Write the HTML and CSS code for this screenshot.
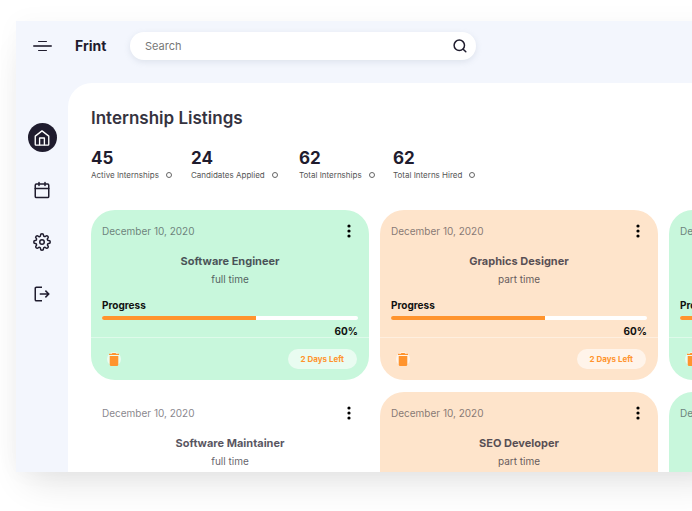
FILE: index.html
```html
<!DOCTYPE html>
<html lang="en">
<head>
<meta charset="utf-8">
<meta name="viewport" content="width=device-width, initial-scale=1">
<title>Frint</title>
<link rel="stylesheet" href="styles.css">
</head>
<body>
<div class="app">
  <header class="topbar">
    <button class="icon-button menu" type="button" aria-label="Menu"><span class="menu-line short"></span><span class="menu-line"></span><span class="menu-line short"></span></button>
    <span class="brand">Frint</span>
    <form class="search">
      <input class="search-input" type="search" placeholder="Search" aria-label="Search">
      <button class="icon-button" type="submit" aria-label="Submit search">
        <svg width="14" height="14" viewBox="0 0 14 14" fill="none" stroke="#1f1c2e" stroke-width="1.5"><circle cx="6.3" cy="6.3" r="5.2"/><path d="M10.2 10.2 12.8 12.8" stroke-linecap="round"/></svg>
      </button>
    </form>
  </header>
  <div class="body">
    <nav class="sidebar" aria-label="Main">
      <a class="nav-link active" href="#" aria-label="Home">
        <svg width="18" height="18" viewBox="0 0 24 24" fill="none" stroke="currentColor" stroke-width="1.8" stroke-linejoin="round"><path d="M3 9.500 12 2.500l9 7V20.500a1 1 0 0 1-1 1H4a1 1 0 0 1-1-1z"/><path d="M8.800 21.500v-9.500h6.400v9.500"/></svg>
      </a>
      <a class="nav-link" href="#" aria-label="Calendar">
        <svg width="18" height="18" viewBox="0 0 24 24" fill="none" stroke="currentColor" stroke-width="2" stroke-linecap="round" stroke-linejoin="round"><rect x="3" y="4" width="18" height="18" rx="1.500"/><path d="M8 2v4M16 2v4M3 10h18"/></svg>
      </a>
      <a class="nav-link" href="#" aria-label="Settings">
        <svg width="18" height="18" viewBox="0 0 24 24" fill="none" stroke="currentColor" stroke-width="2" stroke-linejoin="round"><circle cx="12" cy="12" r="3"/><path d="M19.4 15a1.65 1.65 0 0 0 .33 1.82l.06.06a2 2 0 1 1-2.830 2.830l-.06-.06a1.65 1.65 0 0 0-2.900 1.170V21a2 2 0 1 1-4 0v-.09A1.65 1.65 0 0 0 7.100 19.650l-.06.06a2 2 0 1 1-2.830-2.830l.06-.06A1.65 1.65 0 0 0 3.100 14H3a2 2 0 1 1 0-4h.09a1.65 1.65 0 0 0 1.180-2.820l-.06-.06a2 2 0 1 1 2.830-2.830l.06.06A1.65 1.65 0 0 0 10 3.100V3a2 2 0 1 1 4 0v.09a1.65 1.65 0 0 0 2.820 1.180l.06-.06a2 2 0 1 1 2.830 2.830l-.06.06A1.65 1.65 0 0 0 20.910 10H21a2 2 0 1 1 0 4h-.09a1.65 1.65 0 0 0-1.510 1z"/></svg>
      </a>
      <a class="nav-link" href="#" aria-label="Log out">
        <svg width="18" height="18" viewBox="0 0 24 24" fill="none" stroke="currentColor" stroke-width="2"><path d="M12 3H4.500A1.500 1.500 0 0 0 3 4.500v15A1.500 1.500 0 0 0 4.500 21H12M9 12h12M16.500 7.500 21 12l-4.500 4.500"/></svg>
      </a>
    </nav>
    <main class="panel">
      <h1 class="page-title">Internship Listings</h1>
      <section class="stats" aria-label="Totals">
        <div class="stat"><strong class="stat-value">45</strong><span class="stat-label">Active Internships<i class="ring"></i></span></div>
        <div class="stat"><strong class="stat-value">24</strong><span class="stat-label">Candidates Applied<i class="ring"></i></span></div>
        <div class="stat"><strong class="stat-value">62</strong><span class="stat-label">Total Internships<i class="ring"></i></span></div>
        <div class="stat"><strong class="stat-value">62</strong><span class="stat-label">Total Interns Hired<i class="ring"></i></span></div>
      </section>
      <section class="cards" id="cards" aria-label="Listings"></section>
    </main>
  </div>
</div>
<template id="card-template">
  <article class="card">
    <div class="card-content">
      <div class="card-top">
        <time class="date" datetime="2020-12-10">December 10, 2020</time>
        <button class="icon-button more" type="button" aria-label="More options"><svg width="4" height="14" viewBox="0 0 4 14"><circle cx="2" cy="2" r="1.600"/><circle cx="2" cy="7" r="1.600"/><circle cx="2" cy="12" r="1.600"/></svg></button>
      </div>
      <h2 class="role"></h2>
      <p class="hours"></p>
      <p class="progress-label">Progress</p>
      <div class="track"><div class="fill"></div></div>
      <p class="percent"></p>
    </div>
    <footer class="card-footer">
      <button class="icon-button trash" type="button" aria-label="Delete"><svg width="10" height="13" viewBox="0 0 10 13" fill="#ff942e"><path d="M0 .7h2.800L3.400 0h3.200l.6.700H10V2H0zM.700 2.900h8.600v8.600A1.500 1.500 0 0 1 7.800 13H2.200A1.500 1.500 0 0 1 .700 11.500z"/></svg></button>
      <span class="pill">2 Days Left</span>
    </footer>
  </article>
</template>
<script src="script.js"></script>
</body>
</html>
```
FILE: styles.css
```css
* {
  box-sizing: border-box;
}

body {
  margin: 0;
  height: 100vh;
  padding: 21px 0 39px 16px;
  overflow: hidden;
  background: #fff;
  color: #1f1c2e;
  font: 11px/16px Inter, "Liberation Sans", sans-serif;
}

h1, h2, p {
  margin: 0;
}

.app {
  display: flex;
  flex-direction: column;
  height: 100%;
  margin-right: -40px;
  background: #f3f6fd;
  box-shadow: 0 20px 36px -12px rgba(0, 0, 0, 0.12), 0 0 24px rgba(0, 0, 0, 0.03);
}

.icon-button {
  display: flex;
  align-items: center;
  justify-content: center;
  padding: 0;
  border: 0;
  background: none;
}

.topbar {
  display: flex;
  align-items: center;
  flex-shrink: 0;
  padding: 11px 16px 23px 17px;
}

.menu {
  flex-direction: column;
  gap: 3px;
  width: 19px;
}

.menu-line {
  width: 100%;
  height: 2px;
  border-radius: 1px;
  background: #4a4857;
}

.menu-line.short {
  width: 9px;
  height: 1px;
  background: #1f1c2e;
}

.brand {
  width: 55px;
  margin-left: 23px;
  font-size: 14px;
  font-weight: 700;
}

.search {
  display: flex;
  align-items: center;
  flex: 0 1 346px;
  height: 28px;
  padding: 0 9px 0 15px;
  border-radius: 14px;
  background: #fff;
  box-shadow: 0 2px 6px rgba(136, 148, 171, 0.2);
}

.search-input {
  flex: 1;
  min-width: 0;
  padding: 0;
  border: 0;
  outline: 0;
  background: none;
  color: inherit;
  font: inherit;
}

.search-input::placeholder {
  color: #777;
}

.body {
  display: flex;
  flex: 1;
  min-height: 0;
}

.sidebar {
  display: flex;
  flex-direction: column;
  align-items: center;
  gap: 23px;
  flex-shrink: 0;
  width: 52px;
  padding-top: 40px;
}

.nav-link {
  display: flex;
  align-items: center;
  justify-content: center;
  width: 29px;
  height: 29px;
  border-radius: 50%;
  color: #1f1c2e;
}

.nav-link.active {
  background: #1f1c2e;
  color: #fff;
}

.panel {
  flex: 1;
  min-width: 0;
  padding: 24px 0 0 23px;
  overflow: hidden;
  border-radius: 24px 0 0 0;
  background: #fff;
}

.page-title {
  color: #35333f;
  font-size: 17px;
  line-height: 22px;
  font-weight: 600;
}

.stats {
  display: grid;
  grid-template-columns: 100px 108px 94px auto;
  padding: 19px 0 28px;
}

.stat-value {
  display: block;
  font-size: 17px;
  line-height: 20px;
  font-weight: 700;
}

.stat-label {
  display: flex;
  align-items: center;
  gap: 7px;
  color: #555;
  font-size: 8px;
  line-height: 14px;
  white-space: nowrap;
}

.ring {
  width: 6px;
  height: 6px;
  border: 1px solid #666;
  border-radius: 50%;
}

.cards {
  display: grid;
  grid-template-columns: repeat(3, 278px);
  gap: 12px 11px;
}

.card {
  border-radius: 24px;
}

.card.green {
  background: #c8f7dc;
}

.card.peach {
  background: #fee4cb;
}

.card.white {
  background: #fff;
}

.card-content {
  padding: 11px 11px 0;
}

.card-top {
  display: flex;
  align-items: center;
  justify-content: space-between;
  height: 20px;
}

.date {
  color: #1f1c2e;
  font-size: 10px;
  opacity: 0.55;
}

.more {
  width: 18px;
}

.role {
  margin-top: 12px;
  font-size: 11px;
  font-weight: 700;
  text-align: center;
  opacity: 0.75;
}

.hours {
  margin-top: 2px;
  font-size: 10px;
  text-align: center;
  opacity: 0.7;
}

.progress-label {
  margin-top: 10px;
  color: #111;
  font-size: 10px;
  font-weight: 700;
}

.track {
  height: 4px;
  margin-top: 3px;
  overflow: hidden;
  border-radius: 2px;
  background: #fff;
}

.fill {
  height: 100%;
  background: #ff942e;
}

.percent {
  margin-top: 5px;
  color: #111;
  font-size: 10px;
  line-height: 12px;
  font-weight: 700;
  text-align: right;
}

.card-footer {
  display: flex;
  align-items: center;
  justify-content: space-between;
  height: 43px;
  padding: 0 12px 0 16px;
  border-top: 1px solid rgba(255, 255, 255, 0.4);
}

.trash {
  width: 14px;
  height: 14px;
  border-radius: 50%;
  background: rgba(255, 255, 255, 0.6);
}

.pill {
  padding: 2px 13px;
  border-radius: 10px;
  background: rgba(255, 255, 255, 0.6);
  color: #ff942e;
  font-size: 8px;
  font-weight: 700;
}
```
FILE: script.js
```js
const listings = [
  { role: "Software Engineer", hours: "full time", color: "green", done: 60 },
  { role: "Graphics Designer", hours: "part time", color: "peach", done: 60 },
  { role: "Software Engineer", hours: "full time", color: "green", done: 60 },
  { role: "Software Maintainer", hours: "full time", color: "white", done: 60 },
  { role: "SEO Developer", hours: "part time", color: "peach", done: 60 },
  { role: "Software Engineer", hours: "full time", color: "green", done: 60 }
];

const template = document.getElementById("card-template");
const cards = document.getElementById("cards");

for (const item of listings) {
  const node = template.content.cloneNode(true);
  node.querySelector(".card").classList.add(item.color);
  node.querySelector(".role").textContent = item.role;
  node.querySelector(".hours").textContent = item.hours;
  node.querySelector(".fill").style.width = item.done + "%";
  node.querySelector(".percent").textContent = item.done + "%";
  cards.append(node);
}
```
